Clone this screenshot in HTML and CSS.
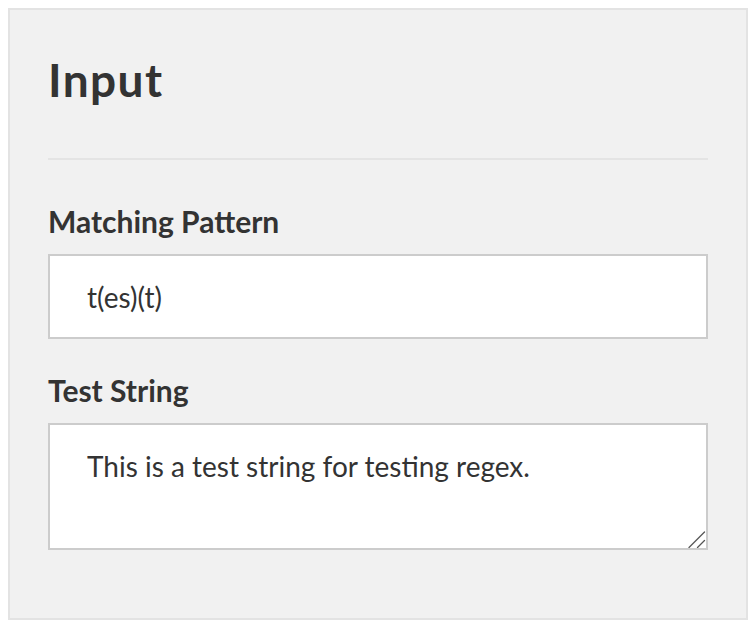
FILE: index.html
```html
<!DOCTYPE html>
<html>
<head>
<meta charset="utf-8">
<link rel="stylesheet" href="styles.css">
</head>
<body>
<section class="panel">
  <h1 class="title">Input</h1>
  <hr class="rule">
  <label class="label" for="pattern">Matching Pattern</label>
  <input class="field" id="pattern" type="text" value="t(es)(t)">
  <label class="label label-second" for="teststr">Test String</label>
  <div class="area-wrap">
    <textarea class="field area" id="teststr">This is a test string for testing regex.</textarea>
    <svg class="grip" width="18" height="18" viewBox="0 0 18 18" aria-hidden="true">
      <line x1="1" y1="17.5" x2="16.5" y2="2" stroke="#555555" stroke-width="1.3" stroke-linecap="round"/>
      <line x1="9.5" y1="17.5" x2="16.5" y2="10.5" stroke="#555555" stroke-width="1.3" stroke-linecap="round"/>
    </svg>
  </div>
</section>
</body>
</html>
```

FILE: styles.css
```css
html, body {
  margin: 0;
  padding: 0;
  background: #ffffff;
}
body {
  padding: 8px;
  font-family: "Lato", "Liberation Sans", sans-serif;
  color: #333333;
}
.panel {
  box-sizing: border-box;
  width: 740px;
  height: 612px;
  background: #f1f1f1;
  border: 2px solid #e3e3e3;
  padding: 38px 38px;
  display: flex;
  flex-direction: column;
}
.title {
  margin: 4px 0 0 0;
  font-size: 46px;
  line-height: 56px;
  font-weight: 700;
  letter-spacing: 1.4px;
  color: #333333;
}
.rule {
  margin: 50px 0 0 0;
  border: none;
  height: 2px;
  background: #e4e4e4;
}
.label {
  display: block;
  margin-top: 43px;
  font-size: 30px;
  line-height: 36px;
  font-weight: 700;
  color: #333333;
}
.label-second {
  margin-top: 33px;
}
.field {
  box-sizing: border-box;
  display: block;
  width: 660px;
  height: 85px;
  margin: 15px 0 0 0;
  padding: 0 37px;
  border: 2px solid #cccccc;
  border-radius: 0;
  background: #ffffff;
  font-family: "Lato", "Liberation Sans", sans-serif;
  font-size: 28px;
  color: #333333;
  outline: none;
}
.area-wrap {
  position: relative;
  width: 660px;
  margin-top: 15px;
}
.area {
  margin: 0;
  height: 127px;
  padding: 24px 37px;
  line-height: 34px;
  resize: none;
}
.grip {
  position: absolute;
  right: 2px;
  bottom: 2px;
  pointer-events: none;
}
```
